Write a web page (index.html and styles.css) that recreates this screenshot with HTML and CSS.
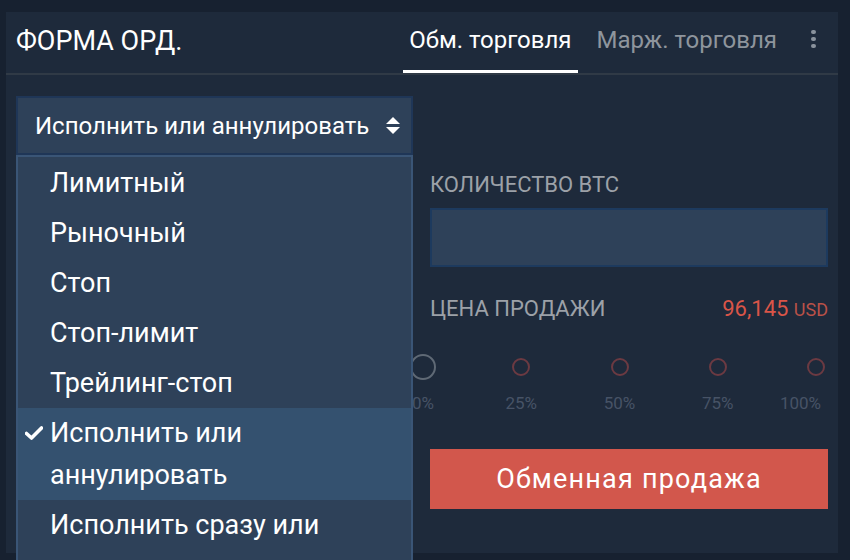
FILE: index.html
```html
<!DOCTYPE html>
<html lang="ru">
<head>
  <meta charset="UTF-8">
  <title>Форма ордера</title>
  <link rel="stylesheet" href="styles.css">
</head>
<body>

  <div class="panel">
    <div class="panel-head">
      <div class="panel-title">ФОРМА ОРД.</div>
      <div class="tabs">
        <div class="tab active">Обм. торговля</div>
        <div class="tab">Марж. торговля</div>
      </div>
      <div class="kebab"><span></span><span></span><span></span></div>
    </div>

    <div class="panel-body">
      <div class="col-left">
        <div class="select-wrap">
          <div class="select">
            <span>Исполнить или аннулировать</span>
            <svg class="sort-icon" width="14" height="20" viewBox="0 0 14 20">
              <path d="M7 1 L14 8 L0 8 Z" fill="#fff"/>
              <path d="M0 11 L14 11 L7 18 Z" fill="#fff"/>
            </svg>
          </div>
          <ul class="dropdown">
            <li>Лимитный</li>
            <li>Рыночный</li>
            <li>Стоп</li>
            <li>Стоп-лимит</li>
            <li>Трейлинг-стоп</li>
            <li class="selected">
              <svg class="check" width="18" height="14" viewBox="0 0 18 14">
                <path d="M1.5 7.5 L6.5 12 L16.5 2" fill="none" stroke="#fff" stroke-width="3.6" stroke-linecap="round" stroke-linejoin="round"/>
              </svg>
              Исполнить или аннулировать
            </li>
            <li>Исполнить сразу или отменить</li>
          </ul>
        </div>
      </div>

      <div class="col-right">
        <div class="field-label">КОЛИЧЕСТВО BTC</div>
        <div class="field-input"></div>

        <div class="price-row">
          <span class="field-label">ЦЕНА ПРОДАЖИ</span>
          <span class="price">96,145 <small>USD</small></span>
        </div>

        <div class="slider">
          <div class="stop first"><i></i><span>0%</span></div>
          <div class="stop"><i></i><span>25%</span></div>
          <div class="stop"><i></i><span>50%</span></div>
          <div class="stop"><i></i><span>75%</span></div>
          <div class="stop last"><i></i><span>100%</span></div>
        </div>

        <button class="sell-btn">Обменная продажа</button>
      </div>
    </div>
  </div>

</body>
</html>
```

FILE: styles.css
```css
html, body {
  overflow: hidden;
}

body {
  margin: 0;
  height: 560px;
  background: #172130;
  font-family: Roboto, "Liberation Sans", sans-serif;
  color: #fff;
}

.panel {
  margin: 12px 12px 0 6px;
  height: 541px;
  background: #1e2a3b;
}

.panel-head {
  display: flex;
  height: 61px;
  border-bottom: 2px solid #303a46;
}

.panel-title {
  align-self: center;
  padding: 0 0 3px 10px;
  font-size: 27px;
  flex: 1;
}

.tabs {
  display: flex;
}

.tab {
  display: flex;
  align-items: center;
  padding: 0 6px 2px;
  margin-right: 13px;
  font-size: 24px;
  color: #8e959d;
  border-bottom: 3px solid transparent;
}

.tab:last-child {
  margin-right: 0;
}

.tab.active {
  color: #fff;
  border-bottom-color: #fff;
}

.kebab {
  display: flex;
  flex-direction: column;
  gap: 3px;
  padding: 18px 22px 0 28px;
}

.kebab span {
  width: 5px;
  height: 4px;
  border-radius: 2px;
  background: #8a929c;
}

.panel-body {
  display: grid;
  grid-template-columns: 397px 1fr;
  column-gap: 17px;
  padding: 21px 10px 0;
}

.select-wrap {
  position: relative;
  z-index: 2;
}

.select {
  display: flex;
  align-items: center;
  justify-content: space-between;
  height: 55px;
  padding: 0 11px 0 17px;
  background: #2e4159;
  border: 2px solid #1f3657;
  font-size: 24px;
}

.dropdown {
  position: absolute;
  top: 100%;
  left: 0;
  right: 0;
  margin: 0;
  padding: 1px 0 0;
  list-style: none;
  background: #2e4159;
  border: 2px solid #3a5576;
  border-bottom: none;
}

.dropdown li {
  position: relative;
  padding: 4px 40px 4px 32px;
  font-size: 27px;
  line-height: 42px;
}

.dropdown li.selected {
  background: #34516f;
}

.check {
  position: absolute;
  left: 7px;
  top: 18px;
}

.col-right {
  padding-top: 79px;
}

.field-label {
  font-size: 22px;
  line-height: 20px;
  color: #9ca1a8;
}

.field-input {
  height: 55px;
  margin-top: 13px;
  background: #2e4159;
  border: 2px solid #1d3a5e;
}

.price-row {
  display: flex;
  justify-content: space-between;
  align-items: baseline;
  margin-top: 29px;
}

.price {
  font-size: 22px;
  color: #da5548;
}

.price small {
  font-size: 18px;
  color: #b95148;
}

.slider {
  display: flex;
  justify-content: space-between;
  margin: 33px 12px 0 -7px;
}

.stop {
  width: 0;
  display: flex;
  flex-direction: column;
  align-items: center;
}

.stop i {
  display: block;
  width: 18px;
  height: 18px;
  margin: 4px 0;
  border: 2px solid #6c3a42;
  border-radius: 50%;
  box-sizing: border-box;
}

.stop.first i {
  width: 26px;
  height: 26px;
  margin: 0;
  border-color: #5f6975;
}

.stop span {
  margin-top: 13px;
  font-size: 17px;
  line-height: 20px;
  color: #475366;
}

.stop.last span {
  margin-right: 31px;
}

.sell-btn {
  display: block;
  width: 100%;
  height: 60px;
  margin-top: 36px;
  border: none;
  background: #d2574c;
  color: #fff;
  font-family: inherit;
  font-size: 27px;
  letter-spacing: 1.2px;
}
```
